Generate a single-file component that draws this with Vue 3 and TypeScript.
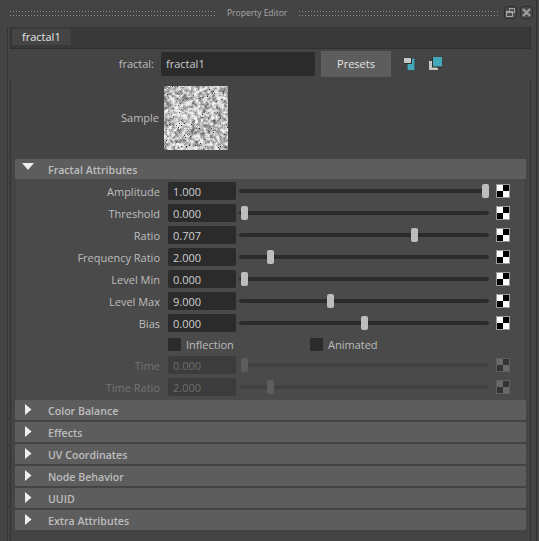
<script setup lang="ts">
import { onMounted, ref } from 'vue'

interface Attr { label: string; value: string; pos: number; disabled?: boolean }

const attrs: Attr[] = [
  { label: 'Amplitude', value: '1.000', pos: 246 },
  { label: 'Threshold', value: '0.000', pos: 5.5 },
  { label: 'Ratio', value: '0.707', pos: 175 },
  { label: 'Frequency Ratio', value: '2.000', pos: 31.5 },
  { label: 'Level Min', value: '0.000', pos: 5.5 },
  { label: 'Level Max', value: '9.000', pos: 91.5 },
  { label: 'Bias', value: '0.000', pos: 125.5 },
]
const disabledAttrs: Attr[] = [
  { label: 'Time', value: '0.000', pos: 5.5, disabled: true },
  { label: 'Time Ratio', value: '2.000', pos: 31.5, disabled: true },
]
const collapsed = ['Color Balance', 'Effects', 'UV Coordinates', 'Node Behavior', 'UUID', 'Extra Attributes']

const noise = ref<HTMLCanvasElement | null>(null)

onMounted(() => {
  const c = noise.value
  if (!c) return
  const ctx = c.getContext('2d')
  if (!ctx) return
  let seed = 20240611
  const rnd = () => {
    seed = (seed + 0x6d2b79f5) | 0
    let t = Math.imul(seed ^ (seed >>> 15), 1 | seed)
    t = (t + Math.imul(t ^ (t >>> 7), 61 | t)) ^ t
    return ((t ^ (t >>> 14)) >>> 0) / 4294967296
  }
  const n = 64
  const base: number[] = []
  for (let i = 0; i < n * n; i++) base.push(rnd())
  const img = ctx.createImageData(n, n)
  for (let y = 0; y < n; y++) {
    for (let x = 0; x < n; x++) {
      let s = 0
      let tw = 0
      for (let dy = -1; dy <= 1; dy++) {
        for (let dx = -1; dx <= 1; dx++) {
          const w = dx === 0 && dy === 0 ? 2 : 1
          tw += w
          s += w * base[((y + dy + n) % n) * n + ((x + dx + n) % n)]
        }
      }
      const v = s / tw
      let g = 192 + (v - 0.5) * 330 + (rnd() - 0.5) * 50
      if (rnd() < 0.012) g = 30 + rnd() * 60
      g = Math.max(20, Math.min(240, g))
      const i = (y * n + x) * 4
      img.data[i] = img.data[i + 1] = img.data[i + 2] = g
      img.data[i + 3] = 255
    }
  }
  ctx.putImageData(img, 0, 0)
})
</script>

<template>
  <div class="window">
    <div class="main">
      <header class="titlebar">
        <span class="grip left"></span>
        <span class="title">Property Editor</span>
        <span class="grip"></span>
        <span class="winbtn first">
          <svg width="11" height="11" viewBox="0 0 11 11" fill="none" stroke="#a6a6a6" stroke-width="1">
            <path d="M4.5 3.5V1.5H9.5V5.5H7.5" />
            <rect x="1.5" y="4.5" width="6" height="5" />
            <path d="M1.5 5.5H7.5" />
          </svg>
        </span>
        <span class="winbtn">
          <svg width="11" height="11" viewBox="0 0 11 11" fill="none" stroke="#9c9c9c" stroke-width="2.2">
            <path d="M2 2L9 9M9 2L2 9" />
          </svg>
        </span>
      </header>

      <div class="frame">
        <div class="tabs">
          <div class="tab">fractal1</div>
        </div>

        <div class="node-row">
          <label class="node-label">fractal:</label>
          <div class="node-input">fractal1</div>
          <button class="presets">Presets</button>
          <svg class="icon-a" width="11" height="12" viewBox="0 0 11 12">
            <rect x="3" y="0" width="8" height="12" fill="#2e2e2e" />
            <rect x="3.5" y="0.5" width="7" height="11.5" fill="#45a8b8" />
            <rect x="0" y="0" width="8" height="6" fill="#2e2e2e" />
            <rect x="0" y="0" width="7" height="5" fill="#c6c6c6" />
          </svg>
          <svg class="icon-b" width="13" height="13" viewBox="0 0 13 13">
            <path d="M0 4H8V11H2V13H0Z" fill="#c6c6c6" />
            <path d="M0 13V11H9V13Z" fill="#c6c6c6" />
            <rect x="3" y="0" width="10" height="10.5" fill="#2e2e2e" />
            <rect x="4" y="0" width="9" height="9.5" fill="#45a8b8" />
          </svg>
        </div>

        <div class="scroller">
          <div class="sample-row">
            <span class="sample-label">Sample</span>
            <canvas ref="noise" class="sample" width="64" height="64"></canvas>
          </div>

          <section class="section-head">
            <svg class="arrow-down" width="12" height="8" viewBox="0 0 12 8"><path d="M0 0H12L6 7Z" fill="#eeeeee" /></svg>
            <span>Fractal Attributes</span>
          </section>

          <div class="attrs">
            <div v-for="a in attrs" :key="a.label" class="attr">
              <span class="attr-label">{{ a.label }}</span>
              <span class="attr-value">{{ a.value }}</span>
              <span class="track"><i class="thumb" :style="{ left: a.pos + 'px' }"></i></span>
              <span class="checker"></span>
            </div>
            <div class="checks">
              <span class="check"><i class="box"></i>Inflection</span>
              <span class="check"><i class="box"></i>Animated</span>
            </div>
            <div v-for="a in disabledAttrs" :key="a.label" class="attr off">
              <span class="attr-label">{{ a.label }}</span>
              <span class="attr-value">{{ a.value }}</span>
              <span class="track"><i class="thumb" :style="{ left: a.pos + 'px' }"></i></span>
              <span class="checker"></span>
            </div>
          </div>

          <div class="collapsed">
            <section v-for="c in collapsed" :key="c" class="section-head">
              <svg class="arrow-right" width="7" height="11" viewBox="0 0 7 11"><path d="M0 0L6.5 5.5L0 11Z" fill="#eeeeee" /></svg>
              <span>{{ c }}</span>
            </section>
          </div>
        </div>
      </div>
    </div>
  </div>
</template>

<style>
html, body { margin: 0; background: #444444; }
</style>

<style scoped>
.window {
  width: 539px;
  height: 541px;
  overflow: hidden;
  background: #444444;
  color: #bdbdbd;
  font: 11px "Open Sans", "Noto Sans", sans-serif;
  display: flex;
}
.main {
  width: 536px;
  height: 541px;
  border-right: 1px solid #2f2f2f;
  flex: none;
}
.titlebar {
  height: 25px;
  display: flex;
  align-items: center;
  padding: 0 3px 0 10px;
  box-sizing: border-box;
}
.grip {
  height: 5px;
  flex: 1;
  background-image: radial-gradient(circle at 0.5px 0.5px, #8a8a8a 0.7px, transparent 0.8px);
  background-size: 3px 4px;
  margin-top: 2px;
}
.grip.left {
  flex: none;
  width: 205px;
}
.title {
  margin: 0 12px;
  font-size: 8.5px;
  color: #a8a8a8;
}
.winbtn {
  width: 13px;
  height: 13px;
  box-sizing: border-box;
  display: flex;
  align-items: center;
  justify-content: center;
  border: 1px solid #2f2f2f;
  border-radius: 3px;
  margin-left: 3px;
  background: #4a4a4a;
}
.winbtn.first { margin-left: 6px; }
.frame {
  margin-left: 7px;
  border-left: 1px solid #333333;
  padding-left: 2px;
  height: 516px;
}
.tabs {
  margin-top: 2px;
  width: 521px;
  height: 22px;
  box-sizing: border-box;
  background: #393939;
  border-left: 1px solid #2f2f2f;
  border-right: 1px solid #2f2f2f;
  border-bottom: 1px solid #2f2f2f;
  padding: 2px 0 0 1px;
}
.tab {
  width: 59px;
  height: 16px;
  background: #444444;
  color: #e6e6e6;
  font-size: 11px;
  line-height: 16px;
  padding-left: 10px;
  box-sizing: border-box;
}
.node-row {
  height: 29px;
  display: flex;
  align-items: center;
  width: 521px;
}
.node-label {
  width: 144px;
  text-align: right;
  color: #bdbdbd;
}
.node-input {
  margin-left: 7px;
  width: 154px;
  height: 24px;
  background: #2b2b2b;
  border-radius: 2px;
  color: #cccccc;
  line-height: 24px;
  padding-left: 5px;
  box-sizing: border-box;
}
.presets {
  margin-left: 6px;
  width: 70px;
  height: 26px;
  background: #5d5d5d;
  border: 0;
  padding: 0;
  font: inherit;
  color: #e4e4e4;
}
.icon-a { margin-left: 13px; }
.icon-b { margin-left: 14px; }
.scroller {
  margin-top: 1px;
  width: 521px;
  height: 463px;
  box-sizing: border-box;
  border-left: 1px solid #333333;
  border-right: 1px solid #333333;
  padding-left: 4px;
}
.sample-row {
  height: 80px;
  display: flex;
  align-items: flex-start;
  padding-top: 7px;
  box-sizing: border-box;
}
.sample-label {
  width: 144px;
  text-align: right;
  line-height: 64px;
}
.sample {
  display: block;
  width: 64px;
  height: 64px;
  margin-left: 5px;
}
.section-head {
  position: relative;
  width: 511px;
  height: 20px;
  background: #5d5d5d;
  border-radius: 1px;
  display: flex;
  align-items: center;
  padding: 2px 0 0 33px;
  box-sizing: border-box;
  font-weight: 600;
  color: #bdbdbd;
  font-size: 10.6px;
}
.arrow-down { position: absolute; left: 7px; top: 4px; }
.arrow-right { position: absolute; left: 10px; top: 4px; }
.attrs {
  width: 508px;
  margin-left: 1px;
  height: 221px;
  background: #4a4a4a;
  padding-top: 3px;
  box-sizing: border-box;
  display: flex;
  flex-direction: column;
  gap: 4px;
}
.attr {
  display: grid;
  grid-template-columns: 144px 76px 253px 20px;
  height: 18px;
  align-items: center;
}
.attr-label {
  text-align: right;
  color: #bdbdbd;
}
.attr-value {
  margin-left: 8px;
  width: 68px;
  height: 18px;
  line-height: 19px;
  background: #2b2b2b;
  border-radius: 2px;
  padding-left: 5px;
  box-sizing: border-box;
  color: #cfcfcf;
}
.track {
  position: relative;
  margin-left: 3px;
  width: 250px;
  height: 4px;
  background: #2b2b2b;
  border-radius: 2px;
}
.thumb {
  position: absolute;
  top: -5px;
  width: 7px;
  height: 14px;
  margin-left: -3.5px;
  background: #bdbdbd;
  border-radius: 2px;
}
.checker {
  margin-left: 8px;
  width: 12px;
  height: 12px;
  outline: 1px solid #9a9a9a;
  background: conic-gradient(#000 25%, #fff 0 50%, #000 0 75%, #fff 0);
}
.checks {
  height: 16px;
  display: flex;
  align-items: center;
  padding-left: 152px;
}
.check {
  display: flex;
  align-items: center;
  width: 142px;
  color: #bdbdbd;
}
.box {
  width: 13px;
  height: 13px;
  background: #2b2b2b;
  border-radius: 1px;
  margin-right: 5px;
}
.off .attr-label { color: #737373; }
.off .attr-value { background: #3c3c3c; color: #6e6e6e; }
.off .track { background: #404040; }
.off .thumb { background: #5d5d5d; }
.off .checker {
  outline-color: #5f5f5f;
  background: conic-gradient(#333 25%, #6a6a6a 0 50%, #333 0 75%, #6a6a6a 0);
}
.collapsed {
  display: flex;
  flex-direction: column;
  gap: 2px;
}
</style>
